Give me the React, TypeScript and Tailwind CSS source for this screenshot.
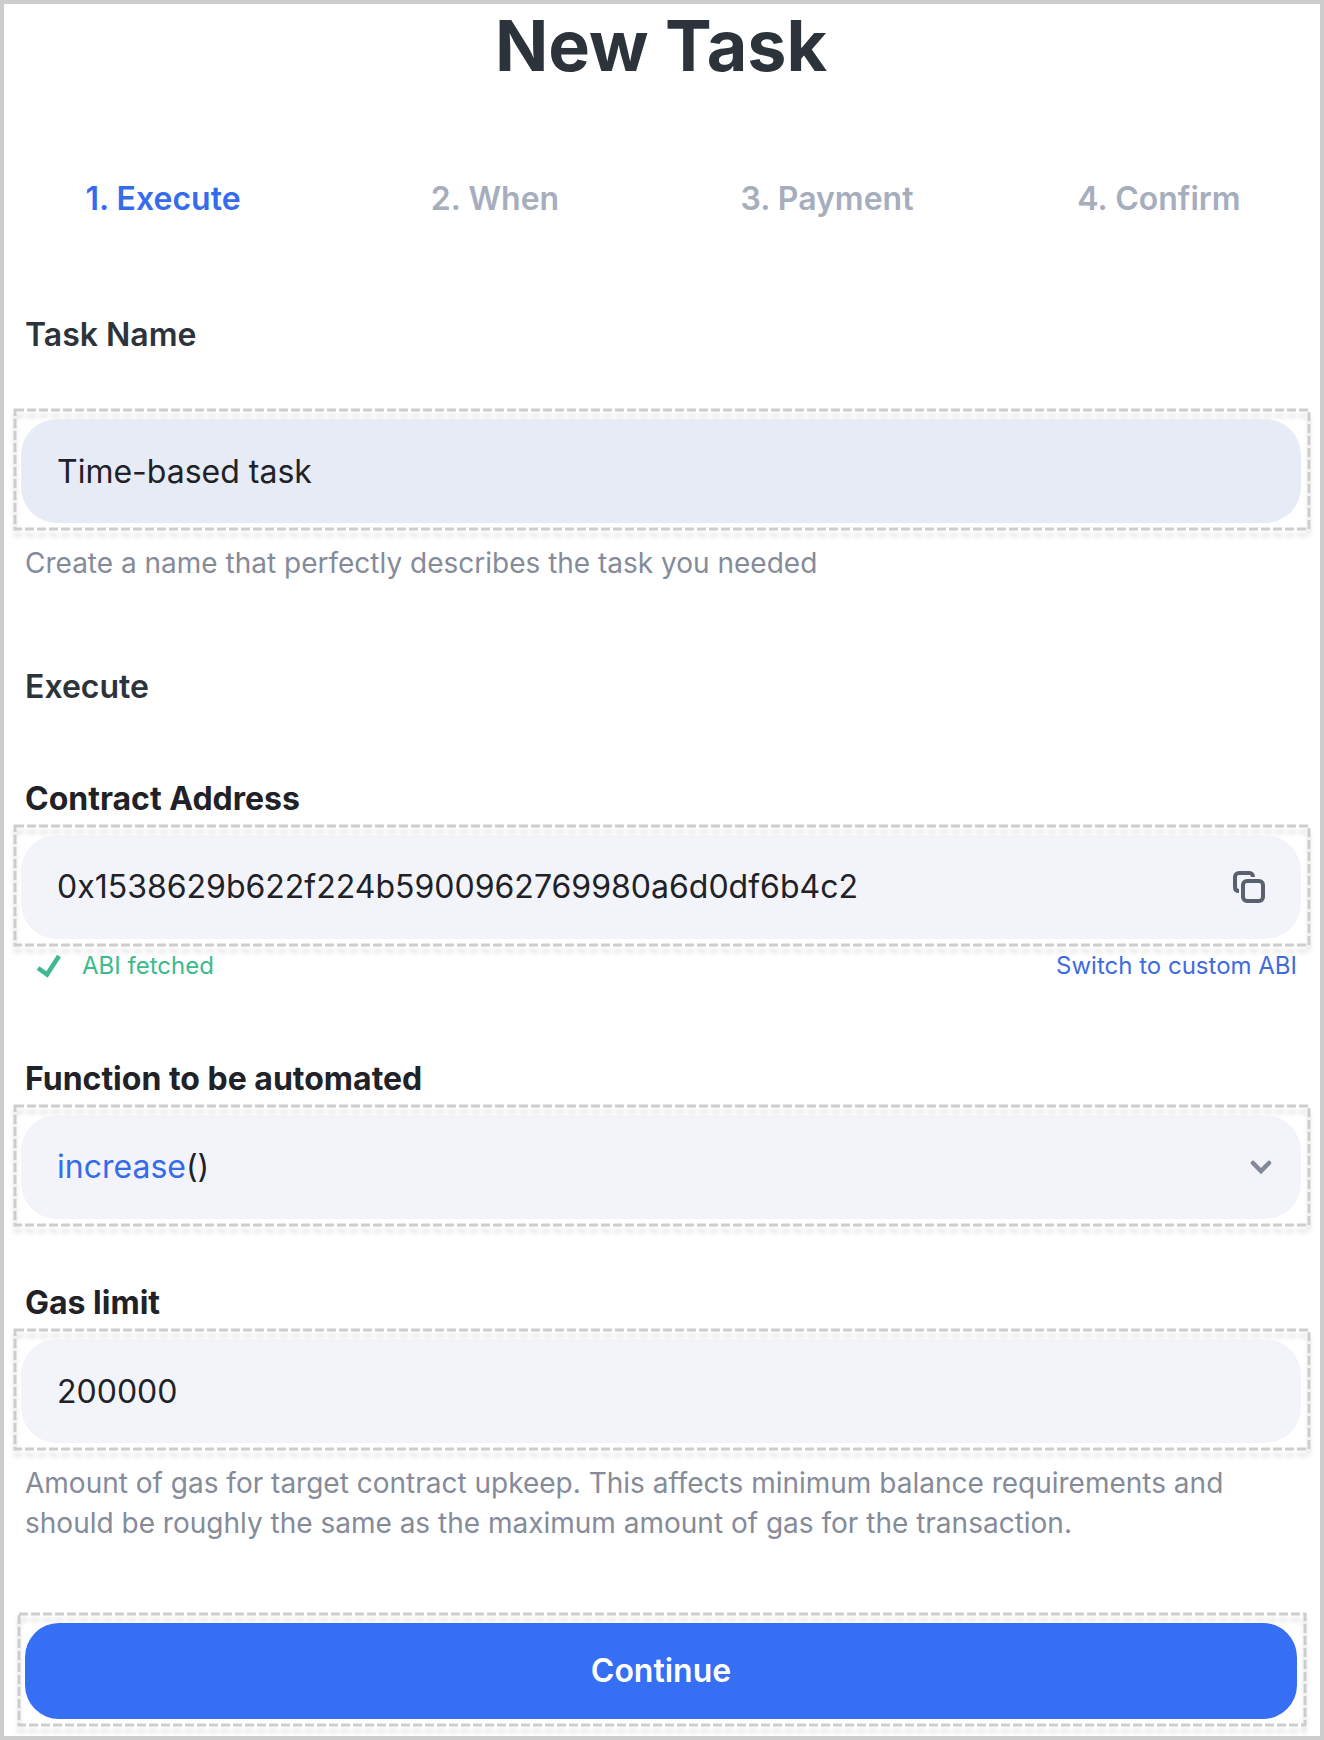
import { useState, type ReactNode } from "react";

/** Dashed annotation outline with a soft shadow, drawn round its child. */
function Outlined({ children, className = "" }: { children: ReactNode; className?: string }) {
  return (
    <div className={`relative ${className}`}>
      <svg
        aria-hidden="true"
        className="pointer-events-none absolute -top-[9px] -left-[6px] h-[calc(100%+15px)] w-[calc(100%+14px)] overflow-visible drop-shadow-[0_6px_2px_rgba(0,0,0,0.12)]"
      >
        <rect width="100%" height="100%" fill="none" stroke="#cdcdcd" strokeWidth="3" strokeDasharray="9 3" />
      </svg>
      <div className="relative">{children}</div>
    </div>
  );
}

function CopyIcon() {
  return (
    <svg aria-hidden="true" viewBox="0 0 32 32" className="size-8" fill="none" stroke="#5b6070" strokeWidth="4">
      <rect x="10" y="10" width="20" height="20" rx="4" />
      <path d="M20 6C20 3.5 18.5 2 16.500 2H6A4 4 0 0 0 2 6V16C2 18.500 3.500 20 6 20" />
    </svg>
  );
}

function CheckIcon() {
  return (
    <svg aria-hidden="true" viewBox="0 0 26 24" className="h-6 w-[26px]" fill="none" stroke="#3dba8c" strokeWidth="4.5">
      <path d="M2 14L11 20.500L23 2" />
    </svg>
  );
}

function ChevronIcon() {
  return (
    <svg
      aria-hidden="true"
      viewBox="0 0 24 24"
      className="pointer-events-none absolute top-10 right-7 size-6"
      fill="none"
      stroke="#838998"
      strokeWidth="4.5"
      strokeLinecap="round"
    >
      <path d="M4 8L12 16L20 8" />
    </svg>
  );
}

const steps = ["1. Execute", "2. When", "3. Payment", "4. Confirm"];

export default function App() {
  const [name, setName] = useState("Time-based task");
  const [address, setAddress] = useState("0x1538629b622f224b5900962769980a6d0df6b4c2");
  const [gas, setGas] = useState("200000");

  return (
    <main className="min-h-screen border-4 border-[#cdcdcd] bg-white pt-[2px] pr-[19px] pb-[17px] pl-[17px] font-['Inter',sans-serif] text-[32px] leading-10 text-[#212228]">
      <h1 className="text-center text-[70px] leading-[80px] font-bold text-[#2d333b]">New Task</h1>

      <nav aria-label="Steps" className="-mx-3 mt-[93px]">
        <ol className="grid grid-cols-4 gap-6 text-center font-semibold">
          {steps.map((step, i) => (
            <li
              key={step}
              aria-current={i === 0 ? "step" : undefined}
              className={i === 0 ? "text-[#366cec]" : "text-[#a6aebe]"}
            >
              {step}
            </li>
          ))}
        </ol>
      </nav>

      <form onSubmit={(e) => e.preventDefault()}>
        <label htmlFor="task-name" className="mx-1 mt-24 block font-semibold text-[#2d333b]">
          Task Name
        </label>
        <Outlined className="mt-16">
          <input
            id="task-name"
            value={name}
            onChange={(e) => setName(e.target.value)}
            className="block h-[104px] w-full rounded-[36px] bg-[#e7ebf5] px-9 outline-none"
          />
        </Outlined>
        <p className="mx-1 mt-5 text-[28px] text-[#858b99]">
          Create a name that perfectly describes the task you needed
        </p>

        <h2 className="mx-1 mt-[84px] font-semibold text-[#2d333b]">Execute</h2>

        <label htmlFor="address" className="mx-1 mt-[72px] block font-bold">
          Contract Address
        </label>
        <Outlined className="mt-4">
          <div className="flex h-[104px] items-center rounded-[36px] bg-[#f3f4f9] px-9">
            <input
              id="address"
              value={address}
              onChange={(e) => setAddress(e.target.value)}
              className="min-w-0 flex-1 outline-none"
            />
            <button type="button" aria-label="Copy address">
              <CopyIcon />
            </button>
          </div>
        </Outlined>
        <div className="mx-1 mt-[7px] flex items-center justify-between text-2xl leading-10">
          <p className="flex items-center gap-5 pl-[11px] text-[#3dba8c]">
            <CheckIcon />
            ABI fetched
          </p>
          <a href="#custom-abi" className="text-[#3f6be0]">
            Switch to custom ABI
          </a>
        </div>

        <label htmlFor="function" className="mx-1 mt-[73px] block font-bold">
          Function to be automated
        </label>
        <Outlined className="mt-4">
          <select
            id="function"
            className="block h-[104px] w-full appearance-none rounded-[36px] bg-[#f3f4f9] px-9 text-transparent outline-none"
          >
            <option>increase()</option>
          </select>
          <span aria-hidden="true" className="pointer-events-none absolute top-8 left-9">
            <span className="text-[#366cec]">increase</span>()
          </span>
          <ChevronIcon />
        </Outlined>

        <label htmlFor="gas" className="mx-1 mt-16 block font-bold">
          Gas limit
        </label>
        <Outlined className="mt-4">
          <input
            id="gas"
            inputMode="numeric"
            value={gas}
            onChange={(e) => setGas(e.target.value)}
            className="block h-[104px] w-full rounded-[36px] bg-[#f3f4f9] px-9 outline-none"
          />
        </Outlined>
        <p className="mx-1 mt-5 text-[28px] text-[#858b99]">
          Amount of gas for target contract upkeep. This affects minimum balance requirements and should be roughly the
          same as the maximum amount of gas for the transaction.
        </p>

        <Outlined className="mx-1 mt-20">
          <button type="submit" className="block h-24 w-full rounded-[34px] bg-[#366ef4] font-semibold text-white">
            Continue
          </button>
        </Outlined>
      </form>
    </main>
  );
}
